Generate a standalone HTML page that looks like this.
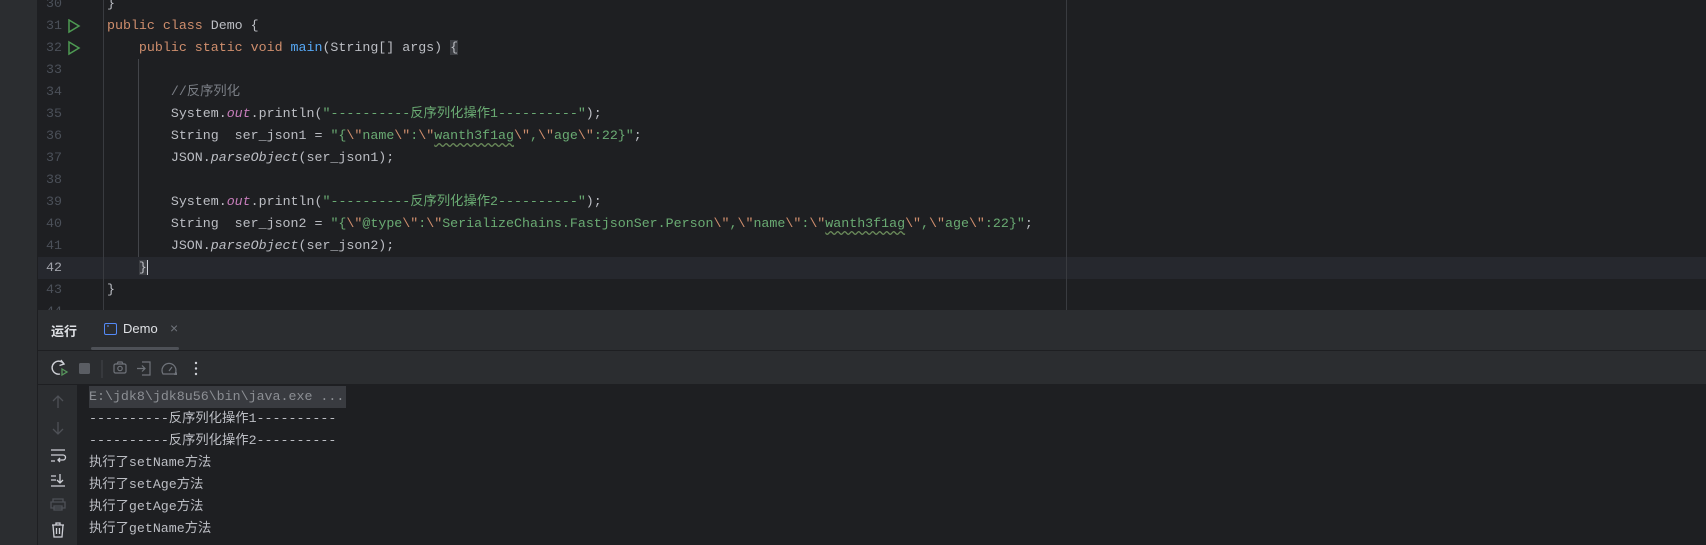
<!DOCTYPE html>
<html><head><meta charset="utf-8"><style>
*{margin:0;padding:0;box-sizing:border-box}
body{width:1706px;height:545px;background:#1e1f22;position:relative;overflow:hidden;font-family:"Liberation Mono","Noto Sans CJK SC",monospace;font-size:13.3px;color:#bcbec4}
.abs{position:absolute}
.ln{position:absolute;left:38px;width:24px;text-align:right;color:#4b5059;height:22px;line-height:22px}
.cl{position:absolute;left:107px;white-space:pre;height:22px;line-height:22px}
.k{color:#cf8e6d}.s{color:#6aab73}.m{color:#56a8f5}.o{color:#c77dbb;font-style:italic}.i{font-style:italic}.c{color:#7a7e85}.e{color:#cf8e6d}
.w{text-decoration:underline wavy #6a8a5a;text-underline-offset:3px}
.co{position:absolute;left:89px;white-space:pre;height:22px;line-height:22px}
.ui{font-family:"Liberation Sans","Noto Sans CJK SC",sans-serif}
</style></head><body>
<div class="abs" style="left:0;top:0;width:38px;height:545px;background:#2b2d30"></div>
<div class="abs" style="left:37px;top:0;width:1px;height:545px;background:#1e1f22"></div>
<div class="abs" style="left:38px;top:257px;width:1668px;height:22px;background:#26282e"></div>
<div class="abs" style="left:103px;top:0;width:1px;height:310px;background:#393b40"></div>
<div class="abs" style="left:1066px;top:0;width:1px;height:310px;background:#393b40"></div>
<div class="abs" style="left:138px;top:59px;width:1px;height:198px;background:#43454a"></div>

<div class="ln" style="top:-7px">30</div>
<div class="ln" style="top:15px">31</div>
<div class="ln" style="top:37px">32</div>
<div class="ln" style="top:59px">33</div>
<div class="ln" style="top:81px">34</div>
<div class="ln" style="top:103px">35</div>
<div class="ln" style="top:125px">36</div>
<div class="ln" style="top:147px">37</div>
<div class="ln" style="top:169px">38</div>
<div class="ln" style="top:191px">39</div>
<div class="ln" style="top:213px">40</div>
<div class="ln" style="top:235px">41</div>
<div class="ln" style="top:257px;color:#a1a3ab">42</div>
<div class="ln" style="top:279px">43</div>
<div class="ln" style="top:301px">44</div>

<svg class="abs" style="left:67px;top:19px" width="14" height="60"><path d="M2 1 L12 7 L2 13 Z" fill="none" stroke="#4e9a53" stroke-width="1.5"/><path d="M2 23 L12 29 L2 35 Z" fill="none" stroke="#4e9a53" stroke-width="1.5"/></svg>

<div class="cl" style="top:-7px">}</div>
<div class="cl" style="top:15px"><span class="k">public class </span>Demo {</div>
<div class="cl" style="top:37px">    <span class="k">public static void </span><span class="m">main</span>(String[] args) <span style="background:#3b3d42">{</span></div>
<div class="cl" style="top:81px">        <span class="c">//反序列化</span></div>
<div class="cl" style="top:103px">        System.<span class="o">out</span>.println(<span class="s">"----------反序列化操作1----------"</span>);</div>
<div class="cl" style="top:125px">        String  ser_json1 = <span class="s">"{<span class="e">\"</span>name<span class="e">\"</span>:<span class="e">\"</span><span class="w">wanth3f1ag</span><span class="e">\"</span>,<span class="e">\"</span>age<span class="e">\"</span>:22}"</span>;</div>
<div class="cl" style="top:147px">        JSON.<span class="i">parseObject</span>(ser_json1);</div>
<div class="cl" style="top:191px">        System.<span class="o">out</span>.println(<span class="s">"----------反序列化操作2----------"</span>);</div>
<div class="cl" style="top:213px">        String  ser_json2 = <span class="s">"{<span class="e">\"</span>@type<span class="e">\"</span>:<span class="e">\"</span>SerializeChains.FastjsonSer.Person<span class="e">\"</span>,<span class="e">\"</span>name<span class="e">\"</span>:<span class="e">\"</span><span class="w">wanth3f1ag</span><span class="e">\"</span>,<span class="e">\"</span>age<span class="e">\"</span>:22}"</span>;</div>
<div class="cl" style="top:235px">        JSON.<span class="i">parseObject</span>(ser_json2);</div>
<div class="cl" style="top:257px">    <span style="background:#3b3d42">}</span><span style="border-left:1px solid #ced0d6"></span></div>
<div class="cl" style="top:279px">}</div>

<div class="abs" style="left:38px;top:310px;width:1668px;height:235px;background:#2b2d30"></div>
<div class="abs" style="left:38px;top:350px;width:1668px;height:1px;background:#1e1f22"></div>
<div class="abs" style="left:38px;top:384px;width:1668px;height:1px;background:#1e1f22"></div>
<div class="abs ui" style="left:51px;top:321px;font-size:13px;color:#dfe1e5;font-weight:bold">运行</div>
<svg class="abs" style="left:104px;top:323px" width="13" height="12"><rect x="0.5" y="0.5" width="12" height="11" rx="1.5" fill="none" stroke="#548af7"/><path d="M3 3h2" stroke="#548af7"/></svg>
<div class="abs ui" style="left:123px;top:321px;font-size:13px;color:#dfe1e5">Demo</div>
<div class="abs ui" style="left:170px;top:320px;font-size:14px;color:#6f737a">×</div>
<div class="abs" style="left:91px;top:347px;width:88px;height:3px;border-radius:2px;background:#4e5157"></div>

<svg class="abs" style="left:50px;top:358px" width="170" height="22">
<path d="M14 6 A6.5 6.5 0 1 0 10 16" fill="none" stroke="#ced0d6" stroke-width="1.4"/><path d="M11 2 L14 6 L9.5 7.5" fill="none" stroke="#ced0d6" stroke-width="1.4"/>
<path d="M12 11 L17 14 L12 17 Z" fill="none" stroke="#57965c" stroke-width="1.3"/>
<rect x="29" y="5" width="11" height="11" rx="1.5" fill="#5a5d63"/>
<path d="M52 2v18" stroke="#43454a"/>
<rect x="64" y="6" width="12" height="9" rx="1.5" fill="none" stroke="#6f737a" stroke-width="1.2"/><circle cx="70" cy="10.5" r="2.2" fill="none" stroke="#6f737a" stroke-width="1.2"/><path d="M67 6l1-2h4l1 2" fill="none" stroke="#6f737a" stroke-width="1.2"/>
<path d="M92 4h8v13h-8M87 10.5h8M92 7.5l3 3-3 3" fill="none" stroke="#6f737a" stroke-width="1.2"/>
<path d="M113 16a7 7 0 1 1 12 0z" fill="none" stroke="#6f737a" stroke-width="1.2"/><path d="M119 13l3-4" stroke="#6f737a" stroke-width="1.2"/><path d="M124 17l3 0 0-3z" fill="#6f737a"/>
<circle cx="146" cy="5" r="1.2" fill="#ced0d6"/><circle cx="146" cy="10.5" r="1.2" fill="#ced0d6"/><circle cx="146" cy="16" r="1.2" fill="#ced0d6"/>
</svg>

<div class="abs" style="left:77px;top:385px;width:1629px;height:160px;background:#1e1f22"></div>
<svg class="abs" style="left:48px;top:392px" width="22" height="153" fill="none" stroke-width="1.3">
<path d="M10 4v12M5 9l5-5 5 5" stroke="#4e5157"/>
<path d="M10 30v12M5 37l5 5 5-5" stroke="#4e5157"/>
<path d="M3 58h14M3 63h12a2.5 2.5 0 0 1 0 5h-5M12 66l-2 2 2 2M3 69h4" stroke="#ced0d6"/>
<path d="M3 84h5M3 88h5M3 94h14M12 82v9M9 88l3 3 3-3" stroke="#ced0d6"/>
<path d="M5 110v-3h10v3M3 110h14v6H3zM6 114h8v4H6z" stroke="#4e5157"/>
<path d="M4 133h12M8 133v-2h4v2M5 133l1 12h8l1-12M8.5 136v6M11.5 136v6" stroke="#ced0d6"/>
</svg>

<div class="abs" style="left:89px;top:386px;width:257px;height:22px;background:#393b40"></div>
<div class="co" style="top:386px;color:#8c8f94">E:\jdk8\jdk8u56\bin\java.exe ...</div>
<div class="co" style="top:408px">----------反序列化操作1----------</div>
<div class="co" style="top:430px">----------反序列化操作2----------</div>
<div class="co" style="top:452px">执行了setName方法</div>
<div class="co" style="top:474px">执行了setAge方法</div>
<div class="co" style="top:496px">执行了getAge方法</div>
<div class="co" style="top:518px">执行了getName方法</div>
</body></html>
